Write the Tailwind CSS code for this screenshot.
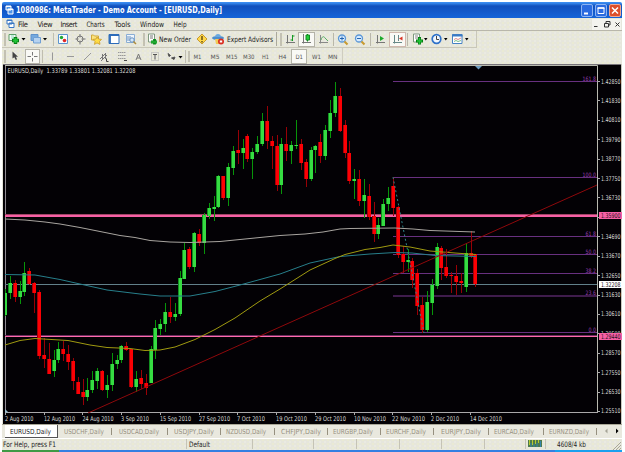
<!DOCTYPE html>
<html>
<head>
  <meta charset="utf-8">
  <title>MetaTrader - EURUSD,Daily</title>
  <script src="https://cdn.jsdelivr.net/npm/@tailwindcss/browser@4"></script>
</head>
<body class="bg-white overflow-hidden">
<div class="w-[622px] h-[452px] pt-[2px] pl-[2px] flex flex-col font-['DejaVu_Sans_Condensed','Liberation_Sans',sans-serif] whitespace-nowrap text-[#222] [&_svg]:overflow-visible">

  <!-- title bar -->
  <div class="h-[16px] shrink-0 flex items-center bg-linear-to-b from-[#3a8cf0] from-5% via-[#1150bd] via-25% to-[#1464d8] rounded-t-[2px] pl-[3px] pr-px">
    <svg class="w-[9px] h-[10px]" viewBox="0 0 9 10"><path d="M1 1h5v4H1zM3 4h5v5H3z" fill="#4d94e8" stroke="#fff"/><path d="M1 1.5h5M3 4.5h5" stroke="#fff"/></svg>
    <svg class="ml-[2px] w-[210px] h-[14px]"><text x="0" y="10" textLength="206" lengthAdjust="spacingAndGlyphs" class="fill-white font-bold text-[8px] font-['DejaVu_Sans',sans-serif]">1080986: MetaTrader - Demo Account - [EURUSD,Daily]</text></svg>
    <div class="ml-auto flex gap-[2px]">
      <svg class="w-[12px] h-[13px]" viewBox="0 0 12 13"><rect x=".5" y=".5" width="11" height="12" rx="1.5" fill="#2a6be0" stroke="#8db4f2"/><path d="M3 9.5h4" stroke="#fff" stroke-width="2"/></svg>
      <svg class="w-[12px] h-[13px]" viewBox="0 0 12 13"><rect x=".5" y=".5" width="11" height="12" rx="1.5" fill="#2a6be0" stroke="#8db4f2"/><path d="M3 4h6v5.500h-6z" fill="none" stroke="#fff"/><path d="M2.500 4h7" stroke="#fff" stroke-width="1.500"/></svg>
      <svg class="w-[12px] h-[13px]" viewBox="0 0 12 13"><rect x=".5" y=".5" width="11" height="12" rx="1.5" fill="#dc4f2c" stroke="#f0a890"/><path d="M3 3.500l6 6M9 3.500l-6 6" stroke="#fff" stroke-width="1.500"/></svg>
    </div>
  </div>

  <div class="h-[46px] shrink-0 flex flex-col bg-[#e6e6dc] bg-[radial-gradient(circle_at_1px_1px,#f6f6b8_0.4px,transparent_0.8px),radial-gradient(circle_at_3px_3px,#f6f6f2_0.4px,transparent_0.8px)] bg-[size:5px_4px]">
    <!-- menu -->
    <div class="h-[13px] flex items-center border-b border-[#b9b7aa]">
      <svg class="ml-[4px] w-[9px] h-[10px]" viewBox="0 0 9 10"><path d="M1 1h5v4H1zM3 4h5v4.500H3z" fill="#fff" stroke="#3976c4"/><path d="M1 1.500h5M3 4.500h5" stroke="#3976c4"/></svg>
      <svg class="ml-px w-[180px] h-[12px] text-[7.5px]" fill="#222">
        <text x="2" y="9" textLength="10">File</text>
        <text x="21.500" y="9" textLength="15">View</text>
        <text x="44.500" y="9" textLength="17">Insert</text>
        <text x="70.500" y="9" textLength="18" lengthAdjust="spacingAndGlyphs">Charts</text>
        <text x="98.500" y="9" textLength="16">Tools</text>
        <text x="124" y="9" textLength="24" lengthAdjust="spacingAndGlyphs">Window</text>
        <text x="157.500" y="9" textLength="13" lengthAdjust="spacingAndGlyphs">Help</text>
      </svg>
      <svg class="ml-auto mr-px w-[30px] h-[11px]" viewBox="0 0 30 11" fill="none" stroke="#333"><path d="M1 0h29v11H1z" fill="#f3f3ee" stroke="none"/><path d="M3 7.500h3.500M13.500 4.500h4v3.500h-4zM15 4v-1.500h4v3.500h-1.500M24.500 3.500l4 4M28.500 3.500l-4 4"/></svg>
    </div>

    <!-- standard toolbar -->
    <div class="h-[17px] flex w-[475px] items-center border-r border-b border-[#c9c7b9]">
      <div class="w-[6px] h-[13px] flex justify-center"><div class="w-[2px] bg-[#c3c1b3]"></div></div>
      <svg class="w-[12px] h-[12px]" viewBox="0 0 12 12"><path d="M1 1.500h7v6H1z" fill="#f6fbf6" stroke="#5a9d67"/><path d="M3 3h3M3 5h3" stroke="#8db"/><path d="M7.500 4v7M4 7.500h7" stroke="#067d14" stroke-width="3.500"/><path d="M7.500 5v5M5 7.500h5" stroke="#20c337" stroke-width="2"/></svg>
      <svg class="w-[9px] h-[5px]" viewBox="0 0 9 5"><path d="M1.500 1h4l-2 2.500z"/></svg>
      <svg class="w-[13px] h-[12px]" viewBox="0 0 13 12"><path d="M2 1.500h7v6H2z" fill="#75a9de" stroke="#5f92cc"/><path d="M4.500 4.500h7v5.500h-7z" fill="#b5d2f0" stroke="#6f9fd4"/></svg>
      <svg class="w-[7px] h-[5px]" viewBox="0 0 7 5"><path d="M1 1h4l-2 2.500z"/></svg>
      <div class="w-[5px] h-[13px] border-r border-[#c0beb0]"></div>
      <svg class="w-[17px] h-[12px]" viewBox="0 0 17 12"><path d="M4.500 1.500h9v9h-9z" fill="#f8fcff" stroke="#5b93cf"/><circle cx="7.500" cy="4.500" r="1.700" fill="#21a632"/><circle cx="10.500" cy="7.500" r="1.800" fill="#e02626"/></svg>
      <svg class="w-[17px] h-[12px]" viewBox="0 0 17 12" fill="none" stroke="#777"><circle cx="9" cy="6" r="3"/><path d="M9 1v3.500M9 7.500v4M4.500 6h3M10.500 6h4"/></svg>
      <svg class="w-[17px] h-[12px]" viewBox="0 0 17 12"><path d="M3.500 2h2l1 1h4v4h-7z" fill="#fbe27c" stroke="#d0a83a"/><path d="M9 4l1.500 2 3 .4-2 2 .5 3-3-1.500-2.500 1.500.5-3-2-2 3-.4z" fill="#ffdc46" stroke="#c99a2a" stroke-width=".8"/></svg>
      <svg class="w-[17px] h-[12px]" viewBox="0 0 17 12"><path d="M4 1.500h10v9H4z" fill="#fff" stroke="#2d6cba"/><path d="M4 2h10M5 2v8" stroke="#2d6cba" stroke-width="1.800"/></svg>
      <svg class="w-[17px] h-[12px]" viewBox="0 0 17 12" fill="none"><path d="M4.500 1.500h8v8h-8z" fill="#eef5fc" stroke="#8aaed4"/><path d="M6 3v5M8 3v5" stroke="#6c92bf"/><circle cx="10" cy="7" r="2.200" stroke="#6991c0" fill="#d5e9fa"/><path d="M11.500 8.500l2.500 2.500" stroke="#b08c3a" stroke-width="1.500"/></svg>
      <div class="w-[6px] h-[13px] flex justify-end"><div class="w-[2px] bg-[#c3c1b3]"></div></div>
      <svg class="w-[14px] h-[12px]" viewBox="0 0 14 12"><path d="M3.500 1h6v8h-6z" fill="#fff" stroke="#7f9880"/><path d="M5 3h3M5 5h3" stroke="#777"/><path d="M6 9h6M9.500 6v5.500" stroke="#0a8b1b" stroke-width="2.800"/><path d="M6 9h6" stroke="#35c746"/></svg>
      <svg class="w-[34px] h-[12px] text-[7.5px]" fill="#222"><text x="0" y="9" textLength="32" lengthAdjust="spacingAndGlyphs">New Order</text></svg>
      <svg class="w-[17px] h-[12px]" viewBox="0 0 17 12"><path d="M9 1l5 5-5 5-5-5z" fill="#ffd84a" stroke="#c99b30"/><path d="M9 3v4M9 8v1.500" stroke="#513b0a" stroke-width="1.300"/></svg>
      <svg class="w-[16px] h-[12px]" viewBox="0 0 16 12"><ellipse cx="8" cy="5" rx="6" ry="2" fill="#4e8fce"/><path d="M5 4c0-4 6-4 6 0z" fill="#69a7df"/><path d="M5 6h6l-1 5H6z" fill="#f2ca56"/><circle cx="11" cy="8.500" r="3" fill="#d92c20"/><path d="M9.800 7.500h2.400v2H9.800z" fill="#fff"/></svg>
      <svg class="w-[49px] h-[12px] text-[7.5px]" fill="#222"><text x="1" y="9" textLength="46" lengthAdjust="spacingAndGlyphs">Expert Advisors</text></svg>
      <div class="w-[2px] h-[14px] border-r border-[#aaa89c]"></div>
      <div class="w-[5px] h-[13px] flex justify-end"><div class="w-[2px] bg-[#c3c1b3]"></div></div>
      <svg class="w-[16px] h-[12px]" viewBox="0 0 16 12" fill="none"><path d="M5.500 2v8.500M4 9.500h9" stroke="#777"/><path d="M10.500 2v6M10.500 3h2M8.500 7h2" stroke="#159a25"/></svg>
      <div class="w-[17px] h-[15px] flex items-center border border-[#b4b3a8] bg-[#f9f9f5]"><svg class="w-[15px] h-[12px]" viewBox="0 0 15 12" fill="none"><path d="M4.500 1v9.500M3 9.500h9" stroke="#777"/><path d="M8.500 1v7.500" stroke="#0a7d19"/><path d="M7 2h3.500v5H7z" fill="#22cf38" stroke="#138a23"/></svg></div>
      <svg class="w-[17px] h-[12px]" viewBox="0 0 17 12" fill="none"><path d="M5.500 2v8.500M4 9.500h9" stroke="#888"/><path d="M6 7c1-4 3-4 4-2l3 3" stroke="#5bac66"/></svg>
      <div class="w-[2px] h-[13px] border-r border-[#b9b7aa]"></div>
      <svg class="w-[17px] h-[13px]" viewBox="0 0 17 13" fill="none"><circle cx="8" cy="5.500" r="3.500" fill="#d6ebff" stroke="#5c97d6" stroke-width="1.300"/><path d="M6 5.500h4M8 3.500v4" stroke="#2365b0"/><path d="M10.500 8.500l3 3" stroke="#c89a2f" stroke-width="2"/></svg>
      <svg class="w-[17px] h-[13px]" viewBox="0 0 17 13" fill="none"><circle cx="8" cy="5.500" r="3.500" fill="#d6ebff" stroke="#5c97d6" stroke-width="1.300"/><path d="M6 5.500h4" stroke="#2365b0"/><path d="M10.500 8.500l3 3" stroke="#c89a2f" stroke-width="2"/></svg>
      <div class="w-[3px] h-[13px] border-r border-[#b9b7aa]"></div>
      <svg class="w-[18px] h-[12px]" viewBox="0 0 18 12" fill="none"><path d="M6.500 2v8.500M5 9.500h9" stroke="#777"/><path d="M9 3l4 2.500-4 2.500z" fill="#1caa2c"/></svg>
      <div class="w-[17px] h-[15px] flex items-center border border-[#d0b8ae] bg-[#f9f9f5]"><svg class="w-[15px] h-[12px]" viewBox="0 0 15 12" fill="none"><path d="M4.500 2v8.500M3 9.500h9M8.500 2v6" stroke="#688"/><path d="M12.500 3.500v4l-3.500-2z" fill="#d93425"/></svg></div>
      <div class="w-[2px] h-[13px] border-r border-[#b9b7aa]"></div>
      <svg class="ml-[3px] w-[13px] h-[12px]" viewBox="0 0 13 12"><path d="M2.500 1h6v8h-6z" fill="#fff" stroke="#7f9880"/><path d="M4 3h3M4 5h3" stroke="#888"/><path d="M8.500 4v7.500M5 8h7" stroke="#067d14" stroke-width="3"/><path d="M8.500 5v6M6 8h5" stroke="#20c337" stroke-width="1.500"/></svg>
      <svg class="w-[6px] h-[5px]" viewBox="0 0 6 5"><path d="M0 1h3.500l-1.750 2.500z"/></svg>
      <svg class="w-[13px] h-[12px]" viewBox="0 0 13 12"><circle cx="6.500" cy="6" r="4.300" fill="#f2f8ff" stroke="#2f72ca" stroke-width="1.700"/><path d="M6.500 3v3.500h2.500" stroke="#444" fill="none"/></svg>
      <svg class="w-[8px] h-[5px]" viewBox="0 0 8 5"><path d="M1 1h3.500l-1.750 2.500z"/></svg>
      <svg class="w-[13px] h-[12px]" viewBox="0 0 13 12" fill="none"><path d="M1.500 1.500h9.500v9H1.500z" fill="#fff" stroke="#4682c4"/><path d="M1 2.500h10.500" stroke="#3a7ac5" stroke-width="2"/><path d="M3 6.500l2-1 2 1 3-1.500" stroke="#d88"/><path d="M3 8.500l2-1 2 1 3-1" stroke="#7b8"/></svg>
      <svg class="w-[6px] h-[5px]" viewBox="0 0 6 5"><path d="M1 1h3.500l-1.750 2.500z"/></svg>
    </div>

    <!-- line studies and periods -->
    <div class="h-[16px] w-[341px] flex items-center border-r border-[#cfcdc0] text-[#555]">
      <div class="w-[6px] h-[13px] flex justify-center"><div class="w-[2px] bg-[#c3c1b3]"></div></div>
      <svg class="w-[17px] h-[12px]" viewBox="0 0 17 12"><path d="M4.500 1.500v7l1.800-1.300 1.500 2.800 1.300-.8-1.300-2.500h2.200z" fill="#444"/></svg>
      <div class="w-[15px] h-[15px] border border-[#b4b3a8] bg-[#f9f9f5]"><svg class="w-[13px] h-[13px]" viewBox="0 0 13 13"><path d="M6.500 2v3.500M6.500 8v3.500M1.500 6.500h3.500M8 6.500h3.500" stroke="#777"/></svg></div>
      <div class="w-[3px] h-[13px] border-r border-[#c0beb0]"></div>
      <svg class="w-[151px] h-[13px]" viewBox="0 0 151 13" fill="none" stroke="#999">
        <path d="M9.500 2.500v8M24 6.500h7M41 10l7-7"/>
        <path d="M57 9l6-6M58 11l6-6M59.500 4v6M62.500 3v6" stroke="#777"/><path d="M63.500 8.500v3h2" stroke="#444"/>
        <path d="M75 2.500h8M75 5.500h8M75 8.500h8" stroke-dasharray="1.500 .5"/><path d="M81 10.500h3" stroke="#444"/>
        <path d="M93 10l2.500-6 2.500 6M94 8h3" stroke="#777"/>
        <path d="M108.500 2.500h7v8h-7z" stroke="#aaa" stroke-dasharray="1 1"/><path d="M110 4.500h4M112 4.500v5" stroke="#555"/>
        <path d="M125 3.500l2.500 2-1.500 1zM128.500 8l3.500-1-1 2.500z" fill="#444" stroke="#555"/><path d="M135.500 6h4l-2 2.500z" fill="#000" stroke="none"/>
        <path d="M142.500 0v13" stroke="#c0beb0"/><path d="M146 1v11" stroke="#c3c1b3" stroke-width="2"/>
      </svg>
      <svg class="w-[96px] h-[12px] text-[6px] font-['DejaVu_Sans',sans-serif]" fill="#555">
        <text x="-.5" y="9" textLength="8" lengthAdjust="spacingAndGlyphs">M1</text>
        <text x="16.500" y="9" textLength="9" lengthAdjust="spacingAndGlyphs">M5</text>
        <text x="32" y="9" textLength="11.500" lengthAdjust="spacingAndGlyphs">M15</text>
        <text x="49" y="9" textLength="11.500" lengthAdjust="spacingAndGlyphs">M30</text>
        <text x="68" y="9" textLength="7" lengthAdjust="spacingAndGlyphs">H1</text>
        <text x="84.500" y="9" textLength="8" lengthAdjust="spacingAndGlyphs">H4</text>
      </svg>
      <div class="w-[16px] h-[15px] ml-px border border-[#b4b3a8] bg-[#f9f9f5]"><svg class="w-[14px] h-[13px] text-[6px] font-['DejaVu_Sans',sans-serif]" fill="#555"><text x="3.500" y="9" textLength="7.500" lengthAdjust="spacingAndGlyphs">D1</text></svg></div>
      <svg class="w-[33px] h-[12px] text-[6px] font-['DejaVu_Sans',sans-serif]" fill="#555">
        <text x="5" y="9" textLength="9" lengthAdjust="spacingAndGlyphs">W1</text>
        <text x="21" y="9" textLength="9.500" lengthAdjust="spacingAndGlyphs">MN</text>
      </svg>
    </div>
  </div>

  <!-- chart -->
  <svg id="chart" class="w-[620px] h-[360px] shrink-0 bg-[#030105] font-['DejaVu_Sans_Condensed',sans-serif] text-[6.5px]" viewBox="2 64 620 360">
    <path d="M2.500 424V64" stroke="#e4e3d9" />
    <path d="M3 64.500H621" stroke="#77737a"/>
    <path d="M621.500 64v360" stroke="#c9c8bd"/>
    <path d="M5.500 412V66" stroke="#8f8a92"/>
    <path d="M5 65.500H597.500V413" stroke="#b9bab0" fill="none"/>
    <path d="M5 412.500H598" stroke="#aaa8aa"/>
    <path d="M5 409l3.500 3.500H5z" fill="#9bbccc"/>
    <path d="M475 66h7l-3.500 3.500z" fill="#6d9cc0"/>
    <g id="levels"></g>
    <path d="M5 284.500H597" stroke="#62808a"/>
    <path d="M5 335.500H597" stroke="#6b2c5e"/>
    <path d="M5 336.500H597" stroke="#ff6bab"/>
    <path d="M5 214.500H597" stroke="#a04566"/>
    <path d="M5 216H597" stroke="#f760a5" stroke-width="2"/>
    <g id="candles" shape-rendering="crispEdges"></g>
    <g fill="none">
      <path d="M5 219L25 220 45 222 60 224 80 227.500 100 231.500 120 235.500 135 237.500 150 240.500 170 242 190 242.500 220 241.500 250 238.500 280 235.500 305 234 323 232 340 229 350 228.500 395 228 413 229 430 230.500 475 232" stroke="#a8a49f"/>
      <path d="M5 274.500L35 275 60 279.500 80 284 107 290 140 294 160 296 190 296 215 291.500 240 285 280 274 310 263 340 256.500 370 254 395 252.500 412 253 435 255.500 476 256.500" stroke="#277f8b"/>
      <path d="M5 345L20 340.500 35 338.500 68 340.500 90 345 107 347.500 130 348.500 145 350.500 160 350 175 347 195 339.500 215 329.500 235 318 260 301 280 289 310 270 335 258.500 345 254.500 365 249.500 380 247.500 393 245 410 247 430 251 455 253 476 254.500" stroke="#a09a10"/>
      <path d="M88 413L597 185" stroke="#8e090c"/>
      <path d="M393 177L424 333" stroke="#32868a" stroke-dasharray="2 2.500"/>
    </g>
    <text x="7.500" y="73" textLength="128" lengthAdjust="spacingAndGlyphs" fill="#deded8" xml:space="preserve">EURUSD,Daily  1.33789 1.33801 1.32081 1.32208</text>
    <g id="axis" fill="#dcdcd8"></g>
  </svg>

  <!-- chart tabs -->
  <div class="h-[14px] shrink-0 flex bg-[#e9e8de] border-t border-[#aaa898]">
    <div class="ml-[3px] w-[53px] bg-white border-r border-b border-[#555]"><svg class="w-[52px] h-[12px] text-[7px]" fill="#222"><text x="5" y="9" textLength="41" lengthAdjust="spacingAndGlyphs">EURUSD,Daily</text></svg></div>
    <svg id="tabs" class="w-[562px] h-[13px] text-[7px]" viewBox="58 0 562 13" fill="#96907f">
      <path d="M607.500 3.500v5l-2.500-2.500z" fill="#a5a396"/><path d="M616 3.500v5l2.500-2.500z" fill="#000"/>
    </svg>
  </div>

  <!-- status bar -->
  <div class="h-[12px] shrink-0 border-t border-white bg-[#e6e6dc] bg-[radial-gradient(circle_at_1px_1px,#f6f6b8_0.4px,transparent_0.8px),radial-gradient(circle_at_3px_3px,#f6f6f2_0.4px,transparent_0.8px)] bg-[size:5px_4px]">
    <svg class="w-[620px] h-[11px] text-[7.5px]" viewBox="2 0 620 11" fill="#222">
      <text x="3" y="8" textLength="53" lengthAdjust="spacingAndGlyphs">For Help, press F1</text>
      <text x="189" y="8" textLength="21" lengthAdjust="spacingAndGlyphs">Default</text>
      <path d="M186.500 0v10M252.500 0v10M313.500 0v10M356.500 0v10M399.500 0v10M441.500 0v10M484.500 0v10M525.500 0v10M545.500 0v10" stroke="#c5c3b6"/>
      <path d="M528 1h14v7h-14z" fill="#4d7a4e"/><path d="M529.500 1v5M532.500 1v5M535.500 1v4M538.500 1v3" stroke="#b6cb32"/><path d="M531 4v4M534 5v3M537 4v4M540.500 2v6" stroke="#3385ad"/>
      <text x="557" y="8" textLength="29" lengthAdjust="spacingAndGlyphs">4608/4 kb</text>
      <path d="M613 11l8-8M616 11l5-5M619 11l2-2" stroke="#a9a798"/>
    </svg>
  </div>
  <div class="h-[2px] shrink-0 flex"><div class="w-[57px] bg-[#3f9a45]"></div><div class="w-[496px] bg-[#347fe2]"></div><div class="grow bg-[#1ba0ee]"></div></div>
</div>

<script>
  // direction, body top, body bottom, high, low
  const candles = [
    ["g",293,315,289,316],["g",283,293,276,299],["r",283,297,280,302],["g",291,297,281,304],["g",273,292,262,296],
    ["r",271,284,268,285],["r",283,293,282,313],["r",292,356,290,359],["r",355,359,338,368],["r",359,374,343,374],
    ["g",360,371,350,377],["g",349,360,342,363],["r",349,354,341,361],["r",354,362,345,370],["r",361,381,358,390],
    ["r",382,394,377,394],["r",392,397,379,405],["g",390,397,378,401],["g",380,390,371,393],["g",371,381,368,389],
    ["r",371,390,370,391],["g",385,390,375,398],["g",364,385,353,391],["g",360,364,355,369],["g",346,360,345,363],
    ["r",346,350,342,351],["r",349,387,349,388],["g",379,387,371,392],["r",378,384,370,389],["r",383,388,374,395],
    ["g",349,383,346,383],["g",328,350,320,359],["g",324,329,319,335],["g",312,324,303,332],["r",312,317,297,323],
    ["g",314,317,303,321],["g",278,314,271,316],["g",250,279,243,279],["r",249,267,247,269],["g",233,267,232,272],
    ["r",234,243,229,246],["g",215,243,213,254],["g",208,216,203,219],["g",207,209,196,221],["g",176,207,175,208],
    ["r",176,198,176,200],["g",167,198,163,206],["g",151,168,146,175],["r",150,153,130,164],["g",148,153,139,169],
    ["r",136,159,134,162],["g",152,159,148,179],["g",144,152,136,154],["g",121,144,113,146],["r",121,141,106,149],
    ["r",141,146,136,169],["r",146,185,135,191],["g",144,185,138,194],["r",144,151,127,161],["g",145,151,141,164],
    ["g",145,146,120,149],["r",144,163,139,170],["r",162,179,159,187],["g",150,179,147,181],["g",146,150,145,173],
    ["r",142,156,134,163],["g",130,156,125,160],["g",113,131,100,138],["g",96,113,82,117],["r",96,131,88,132],
    ["r",125,153,120,158],["r",153,181,141,184],["g",179,181,169,199],["r",179,201,170,206],["g",195,201,179,218],
    ["r",196,217,184,220],["r",216,234,202,242],["g",225,234,218,239],["g",204,226,199,226],["g",198,204,187,211],
    ["r",186,208,177,216],["r",207,255,206,258],["r",254,262,246,273],["g",260,262,249,272],["r",261,280,258,288],
    ["r",273,306,269,315],["r",305,330,297,333],["g",302,330,291,332],["g",285,303,279,315],["g",247,286,243,289],
    ["r",248,268,246,280],["r",267,276,249,278],["r",275,276,272,293],["r",276,282,265,295],["r",281,283,273,293],
    ["g",253,287,243,292],["r",253,256,231,258],["r",254,284,254,287]
  ];
  let out = "";
  candles.forEach(([d, top, bottom, high, low], i) => {
    const x = Math.floor(5.5 + i * 4.85);
    out += `<rect x="${x}" y="${high}" width="1" height="${low - high}" fill="${d == "g" ? "#079409" : "#980006"}"/>`;
    if (i > 0) out += `<rect x="${x - 2}" y="${top}" width="4" height="${bottom - top}" fill="${d == "g" ? "#138f20" : "#a50008"}"/>`;
    out += `<rect x="${i > 0 ? x - 1 : x}" y="${top}" width="${i > 0 ? 3 : 2}" height="${bottom - top}" fill="${d == "g" ? "#36dc42" : "#fc0004"}"/>`;
  });
  document.getElementById("candles").innerHTML = out;

  // fibonacci levels
  out = "";
  [[81.5, "161.8"], [177.5, "100.0"], [236.5, "61.8"], [254.5, "50.0"], [273.5, "38.2"], [296, "23.6"], [332.5, "0.0"]].forEach(([y, label]) => {
    const w = y == 296 ? 2 : 1;
    out += `<path d="M393 ${y}H597" stroke="${w == 2 ? "#3f1c4c" : "#683080"}" stroke-width="${w}"/>`;
    const len = label.length * 3 - 1.5;
    out += `<text x="${596 - len}" y="${y - 1}" textLength="${len}" lengthAdjust="spacingAndGlyphs" font-size="6" fill="#9a3fb4">${label}</text>`;
  });
  document.getElementById("levels").innerHTML = out;

  // price scale, then dates
  out = "";
  for (let i = 0; i < 18; i++) {
    const y = 81.5 + i * 19.41;
    out += `<path d="M597 ${Math.floor(y) + 0.5}h3" stroke="#aaa"/>`;
    // 1.35710 sits fully under the level tag
    if (i != 7) out += `<text x="601" y="${Math.round(y + 2)}" textLength="19.5" lengthAdjust="spacingAndGlyphs">${(1.4285 - i * 0.0102).toFixed(5)}</text>`;
  }
  [[215.5, "1.35900", "#f760a5"], [284.5, "1.32208", "#ffffff"], [336.5, "1.29440", "#f760a5"]].forEach(([y, label, c]) => {
    out += `<rect x="599" y="${y - 3.5}" width="23" height="7" fill="${c}"/>`;
    out += `<text x="601" y="${y + 2.5}" textLength="19.5" lengthAdjust="spacingAndGlyphs" fill="#26101c">${label}</text>`;
  });
  [[5, "2 Aug 2010", 28.5], [44, "12 Aug 2010", 31], [82.5, "24 Aug 2010", 31], [121, "3 Sep 2010", 28], [160, "15 Sep 2010", 31],
   [199, "27 Sep 2010", 31], [237, "7 Oct 2010", 28], [276, "19 Oct 2010", 31], [315, "29 Oct 2010", 31], [354, "10 Nov 2010", 32],
   [392, "22 Nov 2010", 33], [431, "2 Dec 2010", 28], [470, "14 Dec 2010", 32]].forEach(([x, label, w]) => {
    out += `<path d="M${Math.floor(x) + 0.5} 413v2" stroke="#aaa"/>`;
    out += `<text x="${x}" y="421" textLength="${w}" lengthAdjust="spacingAndGlyphs">${label}</text>`;
  });
  document.getElementById("axis").innerHTML = out;

  out = "";
  [["USDCHF", 64, 111], ["USDCAD", 119, 167], ["USDJPY", 174, 220], ["NZDUSD", 226, 274], ["CHFJPY", 281, 327],
   ["EURGBP", 333, 380], ["EURCHF", 386, 433], ["EURJPY", 441, 488], ["EURCAD", 494, 543], ["EURNZD", 549, 596]].forEach(([s, x, sep]) => {
    out += `<text x="${x}" y="9" textLength="40" lengthAdjust="spacingAndGlyphs">${s},Daily</text><path d="M${sep + 0.5} 3v7" stroke="#96907f"/>`;
  });
  document.getElementById("tabs").innerHTML += out;
</script>
</body>
</html>
